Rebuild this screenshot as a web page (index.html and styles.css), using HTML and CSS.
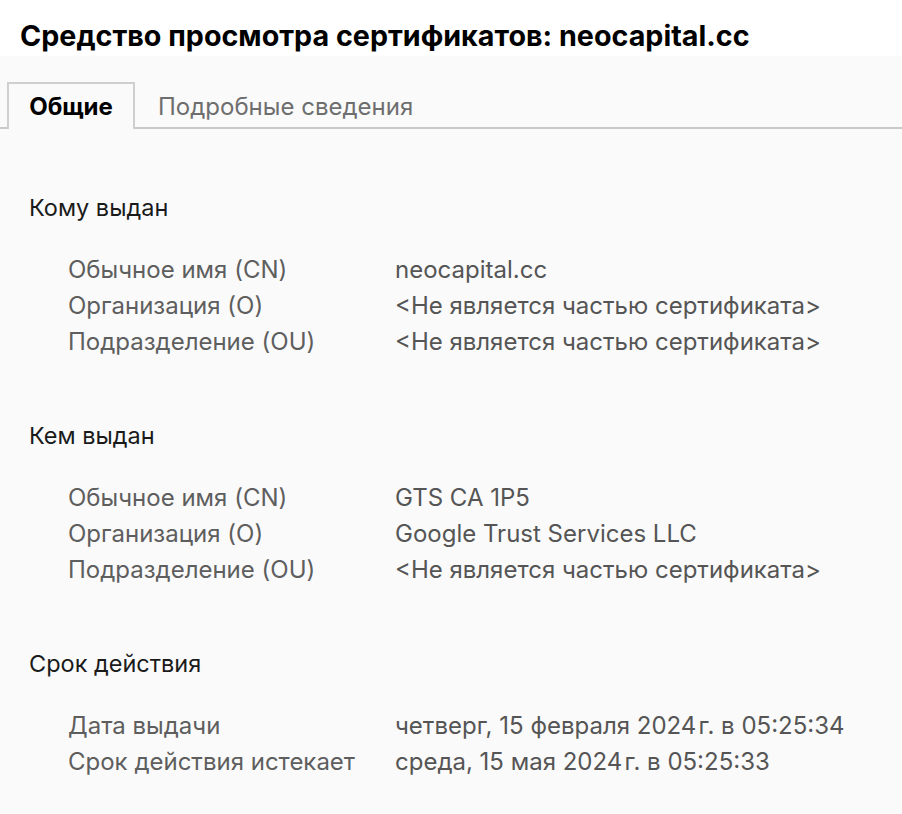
FILE: index.html
```html
<!DOCTYPE html>
<html lang="ru">
<head>
<meta charset="utf-8">
<link rel="stylesheet" href="styles.css">
</head>
<body>
<header class="title-bar">
  <h1 class="title">Средство просмотра сертификатов: neocapital.cc</h1>
</header>
<main class="content">
  <nav class="tabs">
    <div class="tab tab-active">Общие</div>
    <div class="tab">Подробные сведения</div>
  </nav>
  <section class="group">
    <h2 class="group-title">Кому выдан</h2>
    <div class="rows">
      <div class="label">Обычное имя (CN)</div><div class="value">neocapital.cc</div>
      <div class="label">Организация (O)</div><div class="value">&lt;Не является частью сертификата&gt;</div>
      <div class="label">Подразделение (OU)</div><div class="value">&lt;Не является частью сертификата&gt;</div>
    </div>
  </section>
  <section class="group">
    <h2 class="group-title">Кем выдан</h2>
    <div class="rows">
      <div class="label">Обычное имя (CN)</div><div class="value">GTS CA 1P5</div>
      <div class="label">Организация (O)</div><div class="value">Google Trust Services LLC</div>
      <div class="label">Подразделение (OU)</div><div class="value">&lt;Не является частью сертификата&gt;</div>
    </div>
  </section>
  <section class="group">
    <h2 class="group-title">Срок действия</h2>
    <div class="rows">
      <div class="label">Дата выдачи</div><div class="value">четверг, 15 февраля 2024&#8202;г. в 05:25:34</div>
      <div class="label">Срок действия истекает</div><div class="value">среда, 15 мая 2024&#8202;г. в 05:25:33</div>
    </div>
  </section>
</main>
</body>
</html>
```

FILE: styles.css
```css
html, body {
  margin: 0;
  padding: 0;
  background: #fafafa;
  font-family: Inter, "Noto Sans", "Liberation Sans", sans-serif;
}
.title-bar {
  background: #ffffff;
  height: 56px;
  display: flex;
  align-items: center;
  padding-left: 20px;
  padding-top: 16px;
  box-sizing: border-box;
}
.title {
  margin: 0;
  font-size: 28.7px;
  line-height: 34px;
  font-weight: 700;
  color: #000;
  white-space: nowrap;
}
.content {
  padding-top: 26px;
}
.tabs {
  display: flex;
  align-items: flex-end;
  height: 47px;
  border-bottom: 2px solid #c9c9c9;
  padding-left: 7px;
  box-sizing: border-box;
}
.tab {
  height: 47px;
  margin-bottom: -2px;
  box-sizing: border-box;
  display: flex;
  align-items: center;
  padding: 2px 23px 0;
  font-size: 24px;
  color: #6e6e6e;
}
.tab-active {
  color: #000;
  font-weight: 700;
  border: 2px solid #cfcfcf;
  border-bottom: none;
  background: #fafafa;
  width: 128px;
  justify-content: center;
  padding: 0;
}
.group {
  padding-left: 29px;
}
.group-title {
  margin: 0;
  font-weight: 400;
  font-size: 23.5px;
  color: #1a1a1a;
  height: 36px;
  line-height: 36px;
  margin-top: 61px;
}
.group + .group .group-title {
  margin-top: 59px;
}
.rows {
  display: grid;
  grid-template-columns: 327px auto;
  grid-auto-rows: 36px;
  align-items: center;
  margin-top: 25px;
  padding-left: 39px;
  font-size: 24px;
  color: #5e5e5e;
  white-space: nowrap;
}
.value {
  color: #555;
}
```
